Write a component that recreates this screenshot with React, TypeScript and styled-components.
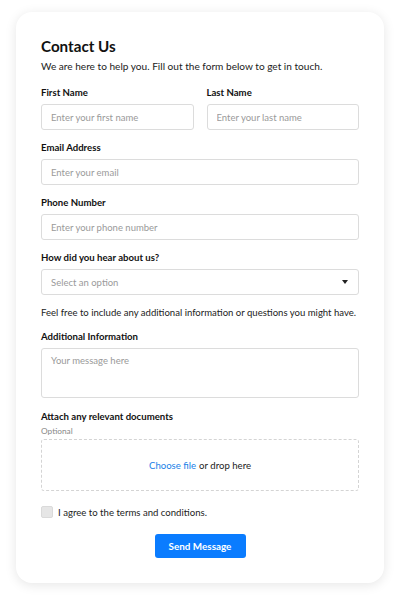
import React from "react";
import styled, { createGlobalStyle } from "styled-components";

const GlobalStyle = createGlobalStyle`
    html, body {
        margin: 0;
        padding: 0;
        background: #ffffff;
        font-family: Lato, "Noto Sans", sans-serif;
        color: #111;
    }
    * { box-sizing: border-box; }
`;

const Page = styled.div`
    padding: 12px 16px 15px;
`;

const Card = styled.form`
    background: #fff;
    border-radius: 16px;
    box-shadow: 0 2px 12px rgba(0, 0, 0, 0.1);
    padding: 24px 25px 25px;
    display: flex;
    flex-direction: column;
`;

const Title = styled.h2`
    margin: 0;
    font-size: 15.2px;
    line-height: 20px;
    font-weight: 700;
`;

const Intro = styled.p<{ $mt?: number; $size?: number }>`
    margin: ${p => p.$mt ?? 4}px 0 0;
    font-size: ${p => p.$size ?? 10.1}px;
    line-height: 15px;
    color: #222;
    white-space: nowrap;
`;

const Row = styled.div`
    display: grid;
    grid-template-columns: 1fr 1fr;
    gap: 13px;
    margin-top: 12px;
`;

const Field = styled.div<{ $mt?: number }>`
    display: flex;
    flex-direction: column;
    min-width: 0;
    margin-top: ${p => p.$mt ?? 0}px;
`;

const Label = styled.label`
    font-size: 9.6px;
    line-height: 14px;
    font-weight: 700;
    margin-bottom: 4px;
`;

const Hint = styled.span`
    font-size: 8.3px;
    line-height: 12px;
    color: #888;
    margin: -3px 0 2px;
`;

const Input = styled.input`
    width: 100%;
    min-width: 0;
    height: 26px;
    border: 1px solid #dcdcdc;
    border-radius: 3px;
    padding: 0 9px;
    font-family: inherit;
    font-size: 9.5px;
    color: #111;
    outline: none;
    &::placeholder { color: #9a9a9a; }
`;

const SelectBox = styled.div`
    height: 26px;
    border: 1px solid #dcdcdc;
    border-radius: 3px;
    padding: 0 9px;
    display: flex;
    align-items: center;
    justify-content: space-between;
    font-size: 9.5px;
    color: #9a9a9a;
`;

const Caret = styled.span`
    width: 0;
    height: 0;
    border-left: 3.5px solid transparent;
    border-right: 3.5px solid transparent;
    border-top: 4px solid #222;
    margin-right: 1px;
`;

const TextArea = styled.textarea`
    height: 50px;
    border: 1px solid #dcdcdc;
    border-radius: 3px;
    padding: 6px 9px;
    font-family: inherit;
    font-size: 9.5px;
    resize: none;
    outline: none;
    &::placeholder { color: #9a9a9a; }
`;

const DropZone = styled.div`
    height: 52px;
    border: 1px dashed #d4d4d4;
    border-radius: 3px;
    display: flex;
    align-items: center;
    justify-content: center;
    font-size: 9.6px;
    color: #222;
`;

const FileLink = styled.span`
    color: #1a7fe8;
    margin-right: 3px;
`;

const CheckRow = styled.label`
    display: flex;
    align-items: center;
    gap: 5px;
    margin-top: 15px;
    font-size: 9.6px;
    color: #222;
`;

const Box = styled.span`
    width: 12px;
    height: 12px;
    border-radius: 2px;
    background: #e6e6e6;
    border: 1px solid #dadada;
`;

const Submit = styled.button`
    align-self: center;
    margin-top: 16px;
    width: 91px;
    height: 24px;
    border: none;
    border-radius: 3px;
    background: #0a7cff;
    color: #fff;
    font-family: inherit;
    font-size: 9.9px;
    font-weight: 700;
`;

export default function App() {
    return (
        <>
            <GlobalStyle />
            <Page>
                <Card onSubmit={e => e.preventDefault()}>
                    <Title>Contact Us</Title>
                    <Intro $mt={3}>We are here to help you. Fill out the form below to get in touch.</Intro>
                    <Row>
                        <Field>
                            <Label>First Name</Label>
                            <Input placeholder="Enter your first name" />
                        </Field>
                        <Field>
                            <Label>Last Name</Label>
                            <Input placeholder="Enter your last name" />
                        </Field>
                    </Row>
                    <Field $mt={11}>
                        <Label>Email Address</Label>
                        <Input placeholder="Enter your email" />
                    </Field>
                    <Field $mt={11}>
                        <Label>Phone Number</Label>
                        <Input placeholder="Enter your phone number" />
                    </Field>
                    <Field $mt={11}>
                        <Label>How did you hear about us?</Label>
                        <SelectBox>
                            Select an option
                            <Caret />
                        </SelectBox>
                    </Field>
                    <Intro $mt={10} $size={9.55}>Feel free to include any additional information or questions you might have.</Intro>
                    <Field $mt={10}>
                        <Label>Additional Information</Label>
                        <TextArea placeholder="Your message here" />
                    </Field>
                    <Field $mt={12}>
                        <Label>Attach any relevant documents</Label>
                        <Hint>Optional</Hint>
                        <DropZone>
                            <FileLink>Choose file</FileLink> or drop here
                        </DropZone>
                    </Field>
                    <CheckRow>
                        <Box />
                        I agree to the terms and conditions.
                    </CheckRow>
                    <Submit type="submit">Send Message</Submit>
                </Card>
            </Page>
        </>
    );
}
